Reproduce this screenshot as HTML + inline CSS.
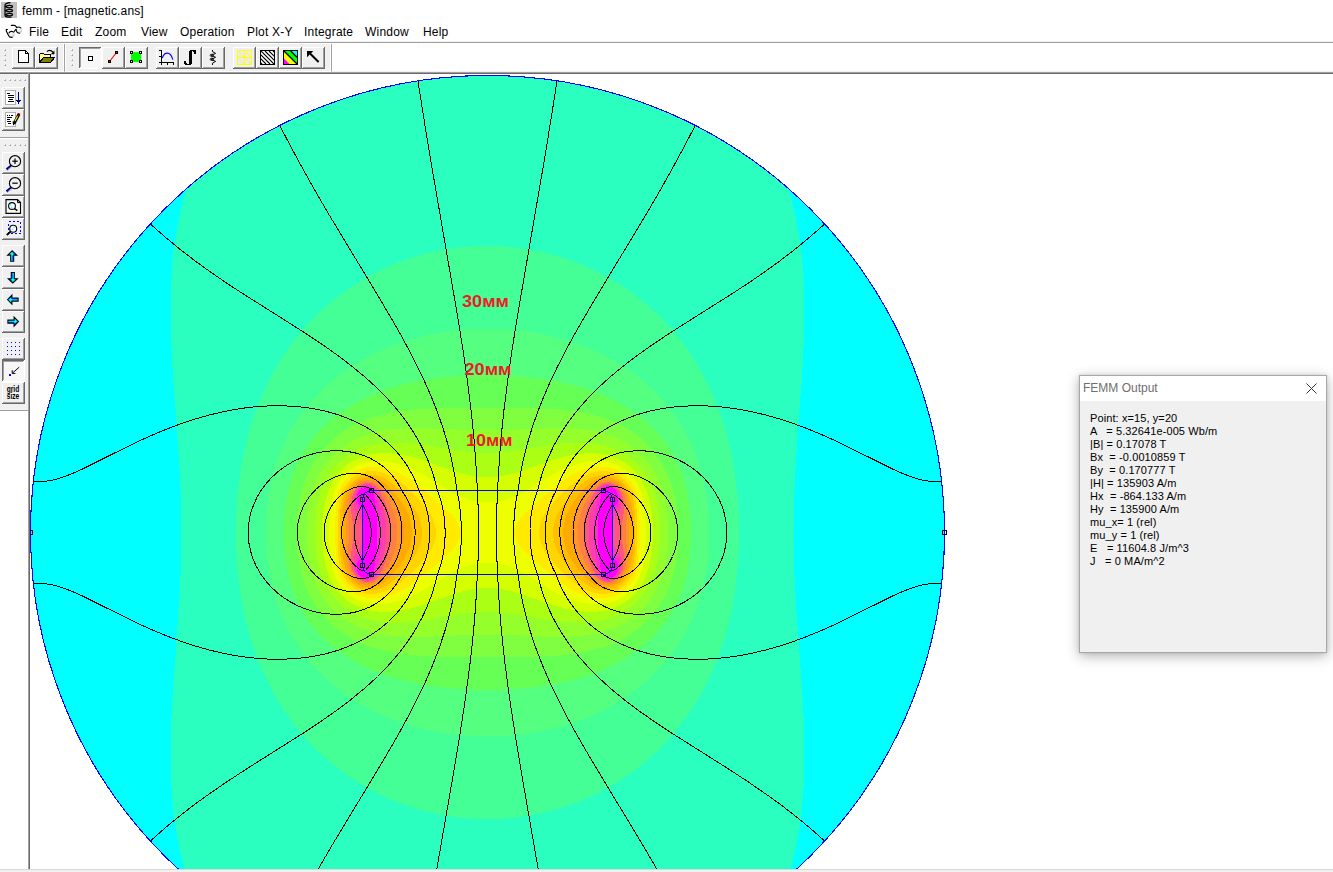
<!DOCTYPE html>
<html lang="en">
<head>
<meta charset="utf-8">
<title>femm - [magnetic.ans]</title>
<style>
*{box-sizing:border-box;margin:0;padding:0}
html,body{width:1333px;height:872px;overflow:hidden;background:#fff;font-family:"Liberation Sans",sans-serif;color:#000}
#app{position:relative;width:1333px;height:872px;background:#fff;overflow:hidden}
#title{position:absolute;left:22px;top:3px;font-size:12px;line-height:16px;white-space:nowrap;letter-spacing:.15px}
#menu{position:absolute;left:0;top:22px;height:20px;width:1333px;font-size:12px;line-height:20px;white-space:nowrap}
#menu span{position:absolute;top:0;letter-spacing:.2px}
#dockline{position:absolute;left:0;top:41px;width:1333px;height:2px;background:#a0a0a0;border-top:1px solid #f0f0f0}
#tb1{position:absolute;left:0;top:44px;width:65px;height:28px;background:#f0f0f0;border-right:1px solid #a0a0a0;border-bottom:1px solid #fff;box-shadow:inset -1px 0 0 #fff}
#tb2{position:absolute;left:65px;top:44px;width:267px;height:28px;background:#f0f0f0;border-right:1px solid #a0a0a0;border-left:1px solid #fff;border-bottom:1px solid #fff;box-shadow:inset -1px 0 0 #fff}
#topedge{position:absolute;left:0;top:71px;width:1333px;height:3px;background:linear-gradient(#f0f0f0 0 1px,#a0a0a0 1px 2px,#696969 2px 3px)}
#ltb{position:absolute;left:0;top:74px;width:28px;height:337px;background:#f0f0f0;border-bottom:1px solid #a0a0a0}
#ledge{position:absolute;left:28px;top:73px;width:2px;height:796px;background:#696969;border-left:1px solid #a0a0a0}
#status{position:absolute;left:0;top:869px;width:1333px;height:3px;background:#f0f0f0;border-top:1px solid #d8d8d8}
.btn{position:absolute;width:23px;height:22px;background:#f0f0f0;border:1px solid;border-color:#fff #696969 #696969 #fff;box-shadow:inset -1px -1px 0 #a0a0a0}
.btn.dn{border-color:#696969 #fff #fff #696969;box-shadow:inset 1px 1px 0 #a0a0a0;background:#f6f6f6}
.btn svg{position:absolute;left:0;top:0}
.grip{position:absolute;width:3px}
#plot{position:absolute;left:0;top:0}
#panel{position:absolute;left:1079px;top:375px;width:248px;height:278px;background:#f0f0f0;border:1px solid #a8a8a8;box-shadow:0 3px 12px rgba(0,0,0,.30),0 0 3px rgba(0,0,0,.12)}
#ptitle{position:absolute;left:0;top:0;width:246px;height:25px;background:#fff;color:#6e6e6e;font-size:12px;line-height:16px;padding:4px 0 0 3px;letter-spacing:0}
#pclose{position:absolute;left:226px;top:7px}
#ptext{position:absolute;left:10px;top:36px;font-size:11px;line-height:13px;white-space:pre;letter-spacing:.1px}
#ptext div{height:13px;white-space:pre}
.lbl{font-family:"Liberation Sans",sans-serif;font-weight:bold;font-size:16.5px;fill:#ee1c25}
</style>
</head>
<body>
<div id="app">
<svg id="plot" width="1333" height="872" viewBox="0 0 1333 872">
<defs><clipPath id="cc"><circle cx="487.5" cy="532.5" r="457"/></clipPath><clipPath id="view"><rect x="30" y="74" width="1303" height="795"/></clipPath></defs>
<g clip-path="url(#view)">
<g clip-path="url(#cc)" shape-rendering="crispEdges">
<circle cx="487.5" cy="532.5" r="457.0" fill="rgb(0,255,255)"/>
<path fill="rgb(42,255,191)" fill-rule="evenodd" d="M254 74.5L255 73.5L720 73.5L729.5 83.5L738.5 94L746.6 104.5L754.3 115.5L760 124.5L765.2 133.5L770 142.5L774.8 152.5L779.1 162.5L783 172.5L789.6 192.5L795 213.5L799.3 236.5L802.3 260.5L804 285.5L804.5 313.5L803.7 344.5L801.9 377.5L797 443.5L795.2 472.5L793.9 503.5L793.5 533.5L793.9 562.5L795.2 593.5L801.8 686.5L803.6 717.5L804.4 745.5L804.2 771.5L803.6 786.5L802.6 800.5L801.2 814.5L799.3 828.5L797.1 841.5L794.3 854.5L791 867.5L787.5 879.5L187.5 879.5L184 867.5L180.7 854.5L177.9 841.5L175.7 828.5L173.8 814.5L172.4 800.5L171.3 785.5L170.7 769.5L170.6 744.5L171.5 716.5L173.2 686.5L179.7 594.5L181 564.5L181.5 535.5L181.2 505.5L179.9 474.5L178.1 445.5L172.9 374.5L171 337.5L170.6 317.5L170.6 299.5L171.2 282.5L172.3 265.5L173.8 250.5L175.7 236.5L178.1 222.5L181.1 208.5L184.5 195.5L188.5 182.5L192.7 170.5L197.5 158.6L203 146.5L208.7 135.5L215 124.5L222 113.5L229.1 103.5L236.9 93.5L245.5 83.5Z"/>
<path fill="rgb(68,255,149)" fill-rule="evenodd" d="M469.4 246.5L482.5 245.9L495.5 246L508.5 246.7L521.5 248.2L533.5 250.1L546.5 253L558.5 256.2L571.5 260.5L583.5 265.2L595.5 270.7L606.5 276.4L617.5 282.9L628.5 290.2L638.5 297.7L648.5 306L657.5 314.3L666.5 323.5L674.5 332.6L682.5 342.7L690.2 353.5L697.2 364.5L703.5 375.6L709.5 387.5L714.8 399.5L719.5 411.6L723.8 424.5L727.8 438.5L730.8 451.5L733.5 465.5L735.6 479.5L737.2 493.5L738.3 508.5L738.9 524.5L738.9 540.5L738.3 556.5L737.2 571.5L735.4 587.5L733.2 601.5L730.4 615.5L727.3 628.5L723.5 641.5L719.1 654.5L714 667.5L708.5 679.5L702.5 691.2L696 702.5L688.8 713.5L681.5 723.6L673.5 733.6L664.5 743.6L655.5 752.6L645.5 761.6L635.5 769.6L624.5 777.5L613.5 784.5L602.5 790.7L590.5 796.7L578.5 801.8L566.5 806.2L553.5 810.2L540.5 813.4L527.5 815.9L514.5 817.7L501.5 818.8L488.5 819.2L475.5 818.9L462.5 817.9L450.5 816.4L437.5 814.1L425.5 811.3L413.5 807.8L400.5 803.4L389.5 798.9L377.5 793.3L366.5 787.4L355.5 780.8L344.5 773.3L334.5 765.7L324.5 757.2L315.5 748.7L306.5 739.3L298.5 730L290.5 719.6L283.5 709.5L276.6 698.5L270.5 687.5L265 676.5L259.8 664.5L255.2 652.5L250.9 639.5L247.2 626.5L244.2 613.5L241.5 599.5L239.4 585.5L237.8 571.5L236.7 556.5L236.1 541.5L236.1 525.5L236.6 509.5L237.7 494.5L239.4 479.5L241.6 464.5L244.2 451.5L247.5 437.5L251.2 424.5L255.5 411.5L260.5 398.8L266 386.5L272.1 374.5L278.4 363.5L285.5 352.5L292.5 342.7L300.5 332.6L309.5 322.5L318.5 313.3L327.5 305.1L337.5 296.9L348.5 288.8L359.5 281.7L370.5 275.3L382.5 269.3L394.5 264L406.5 259.5L418.5 255.6L431.5 252.2L443.5 249.8L456.5 247.8Z"/>
<path fill="rgb(85,255,128)" fill-rule="evenodd" d="M485.1 328.5L496.5 328.6L508.5 329.3L519.5 330.3L531.5 332L542.5 334L553.5 336.5L563.5 339.2L574.5 342.7L584.5 346.4L594.5 350.6L604.5 355.4L613.5 360.3L622.5 365.8L630.5 371.2L638.5 377.2L646.5 383.9L653.5 390.4L660.5 397.7L666.5 404.6L672.7 412.5L678.2 420.5L683.5 429.1L688.1 437.5L692.3 446.5L696 455.5L699.5 465.5L702.4 475.5L704.7 485.5L706.7 496.5L708 506.5L708.9 516.5L709.4 527.5L709.4 538.5L708.8 549.5L707.8 560.5L706.2 571.5L704.3 581.5L701.9 591.5L698.9 601.5L695.6 610.5L691.9 619.5L687.6 628.5L682.6 637.5L677.6 645.5L671.9 653.5L665.6 661.5L659.5 668.4L652.5 675.5L644.5 682.8L636.5 689.3L628.5 695.2L619.5 701.1L610.5 706.4L601.5 711.1L591.5 715.7L581.5 719.8L571.5 723.3L560.5 726.7L549.5 729.5L538.5 731.8L527.5 733.6L516.5 735L505.5 735.9L493.5 736.4L481.5 736.4L469.5 735.9L457.5 734.9L446.5 733.5L434.5 731.4L423.5 729L412.5 726.1L402.5 723L392.5 719.4L382.5 715.3L372.5 710.6L363.5 705.8L354.5 700.5L345.5 694.5L337.5 688.6L329.5 682L322.5 675.5L315.5 668.4L308.6 660.5L302.5 652.7L296.8 644.5L291.8 636.5L286.9 627.5L282.7 618.5L279 609.5L275.5 599.5L272.6 589.5L270.3 579.5L268.3 568.5L267 558.5L266.1 548.5L265.6 537.5L265.6 526.5L266.2 515.5L267.2 504.5L268.8 493.5L270.7 483.5L273.1 473.5L276.1 463.5L279.4 454.5L283.1 445.5L287.4 436.5L292.4 427.5L297.5 419.4L303.5 410.9L309.5 403.4L316.5 395.5L323.5 388.5L331.5 381.3L339.5 374.9L347.5 369.1L356.5 363.3L365.5 358.1L375.5 352.9L384.5 348.8L394.5 344.8L404.5 341.3L415.5 338L426.5 335.3L438.5 332.8L449.5 331.1L461.5 329.7L473.5 328.8Z"/>
<path fill="rgb(102,255,85)" fill-rule="evenodd" d="M469 375.5L487.5 375.1L506.5 375.5L525.5 376.8L542.5 378.8L558.5 381.5L573.5 384.9L587.5 389.1L600.5 394L612.5 399.5L623.5 405.6L637.5 414.8L647.5 422.7L656.4 431.5L663.9 440.5L670.7 450.5L676.7 461.5L682.1 474.5L684.4 481.5L686.5 489.5L689.2 504.5L690.8 521.5L691 539.5L689.7 556.5L687.2 572.5L685.2 580.5L683.1 587.5L678.1 600.5L671.9 612.5L664.7 623.5L656.4 633.5L647.5 642.3L637.5 650.2L622.5 660L609.5 667L600.5 671L590.5 674.9L580.5 678.1L569.5 681.1L558.5 683.5L546.5 685.6L534.5 687.3L522.5 688.5L508.5 689.4L494.5 689.8L480.5 689.8L466.5 689.4L452.5 688.5L439.5 687.1L427.5 685.5L415.5 683.3L404.5 680.8L394.5 678.1L384.5 674.9L374.5 671L365.5 667L357.5 662.9L340.5 652.3L333.5 647.2L327.5 642.3L321.5 636.6L315.9 630.5L311.1 624.5L306.2 617.5L301.9 610.5L298.3 603.5L294.4 594.5L290.9 584.5L288.3 574.5L286.4 564.5L284.8 552.5L284 540.5L283.9 528.5L284.5 516.5L285.6 505.5L287.4 494.5L289.8 484.5L292.5 475.5L296 466.5L300.3 457.5L304.9 449.5L310.5 441.3L316.5 433.8L322.5 427.4L329.5 421L336.5 415.5L343.5 410.7L355.5 403.3L364.5 398.5L374.5 394L384.5 390.1L394.5 386.9L405.5 383.9L417.5 381.3L429.5 379.2L442.5 377.5L455.5 376.3Z"/>
<path fill="rgb(128,255,64)" fill-rule="evenodd" d="M430.6 408.5L465.5 407.7L527.5 407.9L554.5 409.1L565.5 410.2L576.5 411.6L587.5 413.7L597.5 416.1L606.5 419L615.5 422.6L623.5 426.5L631.5 431.4L638.5 436.5L645.5 442.7L653.5 451.4L660.1 460.5L665.7 470.5L670 480.5L673.5 491.5L676.1 503.5L677.7 516.5L678.4 530.5L678 544.5L676.7 557.5L674.2 570.5L671.1 581.5L666.7 592.5L661.3 602.5L655.2 611.5L647.5 620.4L642.5 625.1L636.5 630.1L630.5 634.3L624.5 637.9L618.5 641.1L611.5 644.1L604.5 646.7L596.5 649.1L588.5 651.1L579.5 652.9L560.5 655.4L538.5 656.8L510.5 657.3L460.5 657.3L433.5 656.6L410.5 655L391.5 652.1L381.5 649.9L372.5 647.4L364.5 644.5L356.5 641.1L349.5 637.4L342.5 632.9L335.5 627.7L329.5 622.3L323.1 615.5L317.6 608.5L313.1 601.5L308.8 593.5L305 584.5L302 575.5L299.9 566.5L298.2 556.5L297.1 545.5L296.6 533.5L296.9 521.5L297.9 510.5L299.7 499.5L302 489.5L305 480.5L308.8 471.5L312.5 464.5L316.9 457.5L322.2 450.5L327.5 444.6L333.5 439L339.5 434.2L346.5 429.4L353.5 425.5L360.5 422.1L368.5 419L377.5 416.1L386.5 413.9L396.5 412L407.5 410.4L418.5 409.3Z"/>
<path fill="rgb(149,255,43)" fill-rule="evenodd" d="M401.8 428.5L412.5 428.1L424.5 428.2L467.5 430L486.5 430.4L506.5 430.1L552.5 428.1L565.5 428.2L576.5 428.7L584.5 429.5L592.5 430.8L599.5 432.2L606.5 434.2L613.5 436.7L619.5 439.3L625.5 442.6L630.5 445.8L637.5 451.2L643.9 457.5L649.7 464.5L654.8 472.5L659.3 481.5L662.6 490.5L665 499.5L666.9 510.5L668.1 522.5L668.3 535.5L667.6 548.5L666 560.5L663.8 570.5L660.5 580.6L655.9 590.5L651.1 598.5L644.5 606.9L636.7 614.5L628.5 620.6L619.5 625.7L609.5 629.8L599.5 632.8L587.5 635.1L574.5 636.4L563.5 636.9L551.5 636.9L507.5 635L487.5 634.6L467.5 635L423.5 636.9L410.5 636.9L399.5 636.4L390.5 635.5L382.5 634.2L375.5 632.8L368.5 630.8L361.5 628.3L355.5 625.7L349.5 622.4L344.5 619.2L338.5 614.7L333 609.5L327.6 603.5L323.5 597.9L319.6 591.5L316.1 584.5L313.4 577.5L310.9 569.5L309 560.5L307.6 550.5L306.8 540.5L306.7 529.5L307.1 519.5L308.2 509.5L310 499.5L312.1 491.5L314.5 484.5L317 478.5L320.8 471.5L324.6 465.5L329.3 459.5L333.9 454.5L338.5 450.3L344.5 445.8L350.5 442L356.5 438.8L362.5 436.3L369.5 433.9L376.5 432L384.5 430.4L392.5 429.3Z"/>
<path fill="rgb(170,255,21)" fill-rule="evenodd" d="M390.4 442.5L400.5 442.5L412.5 443.3L425.5 445.1L463.5 451.3L475.5 452.5L487.5 453L499.5 452.5L511.5 451.3L549.5 445.1L562.5 443.3L574.5 442.5L584.5 442.5L594.5 443.4L604.5 445.3L613.5 448.2L622.5 452.4L629.5 456.9L635.5 461.9L640.8 467.5L645.3 473.5L649.4 480.5L653 488.5L655.7 496.5L657.7 505.5L659.3 516.5L660 527.5L659.9 539.5L659.1 550.5L657.3 561.5L655.1 570.5L652.2 578.5L648.4 586.5L643.5 594.1L638.1 600.5L631.5 606.5L624.5 611.4L616.5 615.6L608.5 618.6L599.5 620.8L589.5 622.2L577.5 622.6L563.5 621.8L549.5 619.9L511.5 613.7L499.5 612.5L487.5 612L475.5 612.5L463.5 613.7L425.5 619.9L412.5 621.7L400.5 622.5L390.5 622.5L380.5 621.6L370.5 619.7L361.5 616.8L352.5 612.6L346.5 608.8L341.5 604.9L336.9 600.5L332.6 595.5L329 590.5L325.6 584.5L322.8 578.5L320.2 571.5L318.1 563.5L316.6 555.5L315.5 546.5L315 537.5L315 527.5L315.5 518.5L316.6 509.5L318.1 501.5L319.9 494.5L322 488.5L324.6 482.5L327.2 477.5L330.4 472.5L334.2 467.5L338.5 462.9L342.5 459.3L347.5 455.5L352.5 452.4L358.5 449.4L364.5 447.1L370.5 445.3L376.5 444L383.5 443Z"/>
<path fill="rgb(213,255,0)" fill-rule="evenodd" d="M376.8 453.5L383.5 453.1L390.5 453.3L398.5 454.2L406.5 455.7L414.5 457.6L423.5 460.3L452.5 470.5L463.5 473.9L474.5 476.3L485.5 477.4L491.5 477.3L497.5 476.8L509.5 474.4L521.5 470.8L555.5 459.1L567.5 455.9L577.5 454.1L588.5 453.1L599.5 453.6L604.5 454.4L609.5 455.6L618.5 459L624.5 462.4L630.1 466.5L635.2 471.5L639.2 476.5L642.4 481.5L645 486.5L647.8 494.5L649.9 502.5L651.7 512.5L652.6 520.5L652.9 531.5L652.6 543.5L651.7 552.5L649.9 562.5L647.8 570.5L645 578.5L641.2 585.5L636.9 591.5L632.3 596.5L626.5 601.3L620.5 605L613.5 608.1L605.5 610.4L597.5 611.6L590.5 611.9L583.5 611.6L575.5 610.6L567.5 609.1L551.5 604.7L522.5 594.5L511.5 591.1L500.5 588.7L489.5 587.6L483.5 587.7L477.5 588.2L465.5 590.6L453.5 594.2L419.5 605.9L407.5 609.1L397.5 610.9L386.5 611.9L375.5 611.4L370.5 610.6L365.5 609.4L356.5 606L351.5 603.3L347.5 600.5L343.5 597.3L339.8 593.5L336.5 589.5L333.2 584.5L330.5 579.5L328.9 575.5L326.6 568.5L324.9 561.5L323.5 553.5L322.6 546.5L322.1 538.5L322.1 529.5L322.4 520.5L323.2 513.5L325.8 499.5L327.5 493.5L329.6 487.5L333.8 479.5L336.5 475.5L339.5 471.8L343.5 467.7L347.5 464.5L351.5 461.7L356.5 459L361.5 456.9L366.5 455.4L371.5 454.2Z"/>
<path fill="rgb(238,255,0)" fill-rule="evenodd" d="M369.6 461.5L377.5 460.8L385.5 461.3L394.5 462.9L403.1 465.5L412.5 469.3L422.5 474.3L434.6 481.5L448.1 490.5L457.5 495L465.5 498.3L472.5 500.5L479.5 502L486.5 502.5L493.5 502.2L500.5 501L507.5 499L515.5 495.9L526.9 490.5L542 480.5L555.5 472.7L566.5 467.6L576.5 464L587.5 461.5L592.5 461L597.5 460.8L602.5 461.1L607.5 461.9L612.5 463.2L616.5 464.7L621.5 467.3L626.5 470.7L630.7 474.5L634.5 479L639.1 486.5L641.5 493.5L643.2 500.5L644.3 507.5L645.7 520.5L646 531.5L645.8 542.5L645.2 550.5L643.4 563.5L641.5 571.5L639.1 578.5L635.5 584.6L630.7 590.5L625.5 595.1L619.5 598.9L613.5 601.5L606.5 603.3L598.5 604.1L590.5 603.8L583.5 602.7L576.5 601L569.5 598.6L562.1 595.5L554 591.5L545.2 586.5L526.9 574.5L518.5 570.4L511.5 567.5L503.5 564.8L496.5 563.2L489.5 562.5L483.5 562.6L477.5 563.4L471.5 564.8L464.5 567.1L457.5 570L448.1 574.5L433 584.5L420.5 591.7L409.5 597L398.5 601L387.5 603.5L382.5 604L377.5 604.2L372.5 603.9L367.5 603.1L362.5 601.8L358.5 600.3L354.5 598.3L350.5 595.8L344.3 590.5L341.5 587.3L338.8 583.5L335.9 578.5L334.8 575.5L331.8 564.5L329.6 548.5L329 533.5L329.5 518.5L331.1 504.5L333.2 494.5L335.9 486.5L340.2 479.5L345.5 473.3L348.8 470.5L352.5 467.9L356.5 465.6L360.5 463.9L365.5 462.3Z"/>
<path fill="rgb(255,234,0)" fill-rule="evenodd" d="M365.7 467.5L370.5 466.8L375.5 466.6L380.5 467L386.5 468.2L392.5 470.1L398.2 472.5L403.9 475.5L410.3 479.5L417.1 484.5L424 490.5L435.1 499.5L452.8 515.5L456.2 520.5L458.4 524.5L460.2 528.5L461.5 532.5L460.2 536.5L458.4 540.5L456.2 544.5L452.8 549.5L437.5 563.5L417.1 580.5L407.3 587.5L397.5 592.8L392.5 594.9L387.5 596.5L382.5 597.7L378.5 598.2L370.5 598.2L366.5 597.7L362.5 596.7L358.5 595.2L355.5 593.7L349.6 589.5L346.5 586.5L344 583.5L339.7 576.5L337.5 570.5L336.2 562.5L335.3 541.5L335.3 521.5L336.2 502.5L336.9 497.5L338.1 492.5L339.7 488.5L342.6 483.5L345.5 479.6L348.5 476.5L352.5 473.2L356.5 470.8L360.5 469ZM591.7 467.5L596.5 466.8L600.5 466.6L604.5 466.8L608.5 467.3L612.5 468.3L616.5 469.8L622.9 473.5L626.5 476.5L629.4 479.5L632.4 483.5L634.8 487.5L636.2 490.5L637.2 493.5L638.7 501.5L639.7 523.5L639.7 543.5L638.8 562.5L637.9 568.5L636.6 573.5L634.8 577.5L631.5 582.8L628.5 586.5L624.5 590.3L620.5 593.1L615.5 595.6L610.5 597.2L605.5 598.1L600.5 598.4L595.5 598.1L590.5 597.3L585.5 595.9L580.5 594.1L574.5 591.4L568.5 588L563.2 584.5L557.9 580.5L551 574.5L539.9 565.5L522.2 549.5L518.8 544.5L516.6 540.5L514.8 536.5L513.5 532.5L514.8 528.5L516.6 524.5L518.8 520.5L522.2 515.5L533 505.5L542.2 497.5L551 490.5L559.2 483.5L569.4 476.5L574.8 473.5L580.5 470.9L586.5 468.8Z"/>
<path fill="rgb(255,213,0)" fill-rule="evenodd" d="M366.3 471.5L370.5 471L375.5 471.2L380.5 472.1L385 473.5L389.7 475.5L395.1 478.5L399.5 481.5L404.5 485.5L418.9 499.5L424.9 506.5L430.1 513.5L431.8 516.5L434.2 522.5L435.5 527.5L436.3 532.5L434.8 540.5L433.1 545.5L431.4 549.5L427.9 554.5L423.3 560.5L414 570.5L402.5 581.2L398.1 584.5L393.4 587.5L388.5 590.1L383.5 592L378.5 593.3L373.5 593.9L366.5 593.5L360.5 591.9L354.5 588.8L349.5 584.5L346.9 581.5L343.5 576.5L341 571.5L339.2 564.5L338.3 555.5L338 536.5L338.2 511.5L339.1 501.5L340.6 494.5L342.5 490.1L346.2 484.5L348.5 481.5L351.5 478.5L354.5 476.2L358.5 473.9L362.5 472.4ZM597.6 471.5L601.5 471.1L605.5 471.1L609.5 471.6L612.5 472.4L618.5 475L621.5 476.9L624.5 479.4L628.8 484.5L632.1 489.5L633.6 492.5L635.6 499.5L636.6 508.5L637 527.5L636.7 554.5L635.8 564.5L634 571.5L632.1 575.5L628.1 581.5L625.5 584.6L622.5 587.3L618.5 590L614.5 591.9L610.5 593.2L605.5 593.9L601.5 593.9L596.5 593.3L591.5 592L587.5 590.5L583.4 588.5L578.4 585.5L574.2 582.5L569.4 578.5L560 569.5L555.2 564.5L550.1 558.5L544.9 551.5L543.2 548.5L540.8 542.5L539.5 537.5L538.7 532.5L540.2 524.5L541.9 519.5L543.6 515.5L550.1 506.5L558 497.5L570.5 485.5L578.4 479.5L583.4 476.5L588.5 474.1L593.5 472.4ZM612.5 519.5L612.5 545.5Z"/>
<path fill="rgb(255,191,0)" fill-rule="evenodd" d="M363 475.5L367.5 474.6L371.5 474.5L375.5 475L379.5 476.1L383.5 477.8L387.5 480L391.5 482.8L395.8 486.5L402.7 493.5L407.1 498.5L412.3 505.5L416.1 511.5L418.3 515.5L420 520.5L421.3 525.5L422.1 531.5L421.9 535.5L421.1 540.5L418.3 549.5L413 558.5L406.2 567.5L395.8 578.5L388.5 584.4L384.5 586.7L380.5 588.5L376.5 589.7L372.5 590.4L366.5 590.2L361.5 589L356.5 586.6L351.5 582.4L346.2 575.5L343.2 569.5L341.5 563.5L340.4 555.5L340.4 510.5L341.1 503.5L342.4 497.5L344 493.5L346.2 489.5L351.5 482.6L356.5 478.4L359.5 476.8ZM597.6 475.5L601.5 474.7L604.5 474.5L610.5 475.1L613.5 476L616.5 477.3L619.5 479.1L622.4 481.5L625.2 484.5L628.1 488.5L631.4 494.5L632.5 497.3L633.3 500.5L634.6 509.5L634.6 554.5L633.9 561.5L632.5 567.7L631 571.5L628.8 575.5L625.2 580.5L622.4 583.5L619.5 585.9L615.5 588.2L611.5 589.6L607.5 590.4L603.5 590.5L599.5 590L595.5 588.9L590.5 586.7L586.7 584.5L582.5 581.4L578.1 577.5L573.3 572.5L568.8 567.5L564.1 561.5L560.1 555.5L557.3 550.5L556 547.5L554.4 542.5L552.9 533.5L553.1 529.5L553.9 524.5L556.7 515.5L561.4 507.5L566.4 500.5L573.3 492.5L578.1 487.5L582.6 483.5L586.5 480.6L590.1 478.5L593.5 476.9ZM612.5 513.6L612.5 551.4L612.8 532.5Z"/>
<path fill="rgb(255,170,0)" fill-rule="evenodd" d="M366.1 477.5L369.5 477.3L373.5 477.8L377.5 479L380.7 480.5L383.9 482.5L387.6 485.5L395.1 493.5L399 498.5L403 504.5L405.8 509.5L408.7 515.5L410.9 523.5L412.1 532.5L410.9 541.5L408.7 549.5L403.6 559.5L397.5 568.5L389.7 577.5L383.5 582.8L379.5 585.1L376.5 586.4L373.5 587.2L369.5 587.7L364.5 587.2L360.5 585.9L355.5 582.9L352.1 579.5L348.4 574.5L346 569.5L343.9 562.5L342.5 554.5L342.5 510.5L343.7 503.5L345 498.5L346.4 494.5L348.4 490.5L350.5 487.5L354 483.5L356.5 481.4L359.5 479.5L362.5 478.3ZM603.1 477.5L608.5 477.4L613.5 478.7L618.5 481.4L622 484.5L625.9 489.5L629 495.5L631.1 502.5L632.5 510.5L632.5 554.5L631.3 561.5L629.7 567.5L628.2 571.5L625.9 575.5L622.5 579.9L619.9 582.5L616.5 584.9L613.5 586.3L610.5 587.2L606.5 587.7L602.5 587.4L599.5 586.7L596.2 585.5L592.6 583.5L589.8 581.5L586.3 578.5L578.3 569.5L571.4 559.5L566.3 549.5L564.1 541.5L562.9 532.5L564.1 523.5L566.3 515.5L570.8 506.5L576 498.5L579.9 493.5L584.4 488.5L589.8 483.5L593.5 480.9L596.5 479.4L599.5 478.3ZM612.5 509.6L612.3 532.5L612.5 555.4L612.9 532.5Z"/>
<path fill="rgb(255,149,43)" fill-rule="evenodd" d="M362.6 480.5L365.5 479.8L368.5 479.6L371.5 479.8L374.5 480.7L377.5 482L380.5 484L383.3 486.5L386 489.5L390 494.5L393.3 499.5L396.2 504.5L399.1 510.5L401.2 515.5L402.3 519.5L403.3 524.5L404 530.5L404.1 533.5L403.4 539.5L401.2 549.5L397.7 557.5L393.3 565.5L390 570.5L386 575.5L381.1 580.5L378.3 582.5L375.5 583.9L372.5 584.9L369.5 585.4L364.5 585L359.5 583.1L355.8 580.5L352.3 576.5L349.7 572.5L347.7 567.5L346.4 561.5L345.4 554.5L345.9 532.5L345.4 510.5L347 500.5L348.8 494.5L350.3 491.5L352.3 488.5L354.8 485.5L357 483.5L359.5 481.9ZM601 480.5L603.5 479.8L606.5 479.6L611.5 480.2L616.5 482.5L620.2 485.5L624.1 490.5L626.6 495.5L628.3 501.5L629.6 510.5L629.1 532.5L629.6 554.5L628.6 561.5L627.3 567.5L625.7 571.5L624.1 574.5L621.9 577.5L619.2 580.5L616.5 582.5L613.5 584.1L610.5 585L607.5 585.4L604.5 585.3L601.5 584.7L598.5 583.5L595.5 581.7L590.7 577.5L584.3 569.5L578.3 559.5L573.8 549.5L571.9 541.5L570.9 533.5L571.6 525.5L573.5 516.5L576.3 509.5L579.9 502.5L585 494.5L590.7 487.5L595.5 483.3L598.5 481.5ZM612.5 506.7L612.2 532.5L612.5 558.3L612.9 548.5L613.1 532.5L612.9 516.5Z"/>
<path fill="rgb(255,128,64)" fill-rule="evenodd" d="M366.3 481.5L368.5 481.4L371.5 481.9L374.5 483L376.5 484.2L379.3 486.5L381.1 488.5L385.3 494.5L390.7 504.5L394.7 514.5L396.7 523.5L397.2 530.5L396.8 540.5L395 549.5L392 557.5L388.2 565.5L383.3 573.5L381.1 576.5L378.2 579.5L375.5 581.5L373.5 582.5L371.5 583.1L368.5 583.6L364.5 583.2L360.5 581.7L357.3 579.5L353.7 575.5L351.4 571.5L349.7 566.5L348.7 561.5L348 554.5L349.1 532.5L348 510.5L348.7 503.5L349.7 498.5L351 494.5L352.4 491.5L353.7 489.5L356.3 486.5L358.5 484.5L360.5 483.3L363.5 482ZM605.7 481.5L610.5 481.8L614.5 483.3L617.7 485.5L621.3 489.5L623.6 493.5L625.3 498.5L626.3 503.5L627 510.5L625.9 532.5L627 554.5L626.3 561.5L625.3 566.5L624 570.5L622.6 573.5L620.5 576.5L618.5 578.8L616.5 580.5L613.5 582.2L610.5 583.2L607.5 583.6L604.5 583.3L602.5 582.8L598.1 580.5L593.9 576.5L589.1 569.5L583.8 559.5L580 549.5L578.2 540.5L577.8 533.5L578.2 524.5L580 515.5L583 507.5L586.8 499.5L591 492.5L595.7 486.5L598.1 484.5L600.5 483L603.5 481.9ZM612.5 504.4L612.1 532.5L612.5 560.6L613.1 550.5L613.3 532.5L613.1 514.5Z"/>
<path fill="rgb(255,85,128)" fill-rule="evenodd" d="M363.8 483.5L366.5 483L368.5 483L372.5 484L376.2 486.5L378 488.5L379.9 491.5L384.9 501.5L388.9 512.5L390.3 518.5L391.3 528.5L391.3 537.5L390.3 546.5L388.2 554.5L384.9 563.5L381.1 571.5L377.1 577.5L373.5 580.5L371.5 581.4L368.5 582L365.5 581.9L362.5 581.1L359.5 579.4L356.4 576.5L354.3 573.5L352.5 569.5L351.6 565.5L351.1 560.5L351 554.5L352.9 541.5L353.5 533.5L353 524.5L351 510.5L351.6 499.5L352.8 494.5L355.6 489.5L357.5 487.3L359.5 485.6L361.5 484.4ZM362.5 517.8L362 532.5L362.5 547.2ZM603.9 483.5L607.5 482.9L611.5 483.6L614.5 484.9L617.7 487.5L620.1 490.5L622.2 494.5L623.3 498.5L623.9 504.5L624 510.5L622.1 523.5L621.5 531.5L622 540.5L624 554.5L623.8 561.5L623.3 566.5L622.5 569.5L621.3 572.5L619.4 575.5L617.7 577.5L615.5 579.4L613.5 580.6L611.5 581.4L608.5 582L604.5 581.7L602.5 581L600.5 579.9L597 576.5L593.9 571.5L589.3 561.5L585.8 551.5L584.5 545.5L583.7 536.5L583.7 527.5L584.7 518.5L586.1 512.5L588.9 504.5L592.9 495.5L597 488.5L600 485.5ZM612.5 502.7L612 532.5L612.5 562.3L613.2 552.5L613.4 532.5L613.2 512.5Z"/>
<path fill="rgb(255,64,170)" fill-rule="evenodd" d="M365 484.5L368.5 484.3L370.5 484.7L372.5 485.6L374.8 487.5L377.3 491.5L381.2 501.5L384.4 512.5L385.6 520.5L386.2 529.5L386.1 539.5L384.9 549.5L383.4 556.5L380.1 566.5L377.3 573.5L374.8 577.5L373.5 578.7L371.5 579.9L367.5 580.8L364.5 580.4L362.5 579.7L359.5 577.8L357.5 575.8L355.9 573.5L354.5 570.5L353.7 567.5L353.4 564.5L353.6 559.5L354.8 554.5L357.5 550.3L361.5 545.3L362.5 555.5L362.7 536.5L362.5 509.5L361.5 519.7L359.5 517.3L356 512.5L354.5 509.7L353.5 504.8L353.5 498.5L354.9 493.5L357.3 489.5L360.5 486.4L362.5 485.3ZM605.4 484.5L608.5 484.3L611.5 484.9L614.5 486.4L616.5 488.1L618.5 490.5L620.1 493.5L621.1 496.5L621.6 500.5L621.4 505.5L620.2 510.5L617.5 514.7L613.5 519.7L613.2 508.5L612.5 501.4L612 523.5L612.1 551.5L612.5 563.6L613.2 556.5L613.5 545.3L617.5 550.3L620.2 554.5L621.5 560.5L621.6 564.5L621.3 567.5L619.7 572.5L618.5 574.5L616.5 576.9L614.5 578.6L612.5 579.7L610.5 580.4L607.5 580.8L604.5 580.3L601.2 578.5L598.7 575.5L596.8 571.5L593.2 561.5L590.6 552.5L589.3 543.5L588.7 534.5L588.9 525.5L589.9 516.5L591.1 510.5L593.8 501.5L596.8 493.5L599.4 488.5L601.2 486.5L602.5 485.6Z"/>
<path fill="rgb(255,43,212)" fill-rule="evenodd" d="M365.5 485.5L368.5 485.4L371.5 486.4L373.9 488.5L374.9 490.5L379.6 508.5L380.9 518.5L381.5 528.5L381.3 540.5L380.3 551.5L379.2 558.5L375.8 571.5L374.4 575.5L373 577.5L370.5 579.1L367.5 579.7L364.5 579.3L362.5 578.5L360.5 577.2L358.7 575.5L356.3 571.5L355.6 569.5L355.2 566.5L355.7 562.5L356.7 559.5L358.5 556.7L361.5 553.7L362.5 560.6L362.9 533.5L362.5 504.4L361.5 511.3L359.5 509.5L357.5 506.9L355.9 503.5L355.3 500.5L355.3 497.5L356.3 493.5L358.7 489.5L361.5 487.1L363.5 486ZM606.1 485.5L608.5 485.4L610.5 485.7L613.5 487.1L615.3 488.5L617.1 490.5L618.7 493.5L619.4 495.5L619.8 498.5L619.3 502.5L618.3 505.5L616.5 508.3L613.5 511.3L613.1 504.5L612.5 500.4L612.1 507.5L611.9 526.5L612 553.5L612.5 564.5L613.1 560.5L613.5 553.7L616.5 556.7L618.7 560.5L619.7 564.5L619.6 568.5L618.3 572.5L617.1 574.5L615.3 576.5L613.5 577.9L611.5 579L607.5 579.7L604.5 579.1L602.5 577.9L601.1 576.5L599.7 573.5L596.1 559.5L595.1 554.5L593.9 544.5L593.5 534.5L593.6 525.5L594.3 516.5L595.6 507.5L596.8 502.5L599.4 492.5L600.6 489.5L602.5 487.1L604.5 485.9Z"/>
<path fill="rgb(255,0,255)" fill-rule="evenodd" d="M365.3 486.5L367.5 486.3L370.5 487L372.5 488.5L373.5 490.5L374.1 496.5L376.2 509.5L377.1 524.5L377.1 538.5L376.6 550.5L375.9 557.5L374.1 568.5L373.7 573.5L373.2 575.5L371.5 577.4L369.5 578.4L367.5 578.7L365.5 578.6L363.5 578L360.1 575.5L358.5 573.5L357.4 571.5L356.6 567.5L357 564.5L357.7 562.5L359.5 559.8L361.5 557.9L362.4 563.5L362.4 566.5L362.7 566.5L363 534.5L362.7 498.5L362.4 498.5L362.4 501.5L361.5 507.1L359.5 505.2L357.7 502.5L356.8 499.5L356.7 496.5L357.9 492.5L359.5 490.1L362.5 487.6ZM605.9 486.5L608.5 486.3L610.5 486.7L612.5 487.6L614.5 489.1L617.1 492.5L617.9 494.5L618.4 497.5L618 500.5L617.3 502.5L615.5 505.2L613.5 507.1L613 501.5L612.5 499.8L612.3 500.5L611.9 509.5L611.8 530.5L611.9 554.5L612.3 564.5L612.5 565.2L613 563.5L613.5 557.9L615.5 559.8L617.3 562.5L618.2 565.5L618.3 568.5L617.1 572.5L614.5 575.9L611.5 578L609.5 578.6L607.5 578.7L605.5 578.4L603.5 577.4L602.5 576.5L601.5 574.5L598.7 554.5L597.9 538.5L597.9 525.5L598.4 514.5L599.1 507.5L600.9 496.5L601.3 491.5L601.8 489.5L602.5 488.5L604.5 487Z"/>
<path fill="none" stroke="#000" stroke-width="1" d="M540 879.5L522.5 778.9L515.5 737L509.3 696.5L504.6 660.5L502.6 642.5L500.9 624.5L499.4 606.5L498.4 589.5L497.1 564.5L496.7 550.5L496.5 532.5L496.7 514.5L497.1 500.5L498.4 474.5L500.5 444.5L502.1 427.5L503.9 410.5L508.5 374.3L512.5 347L517.5 315.7L544.1 161.5L551.3 117.5L558.2 73.5M435 879.5L452.5 778.9L459.5 737L465.7 696.5L470.4 660.5L472.4 642.5L474.1 624.5L475.6 606.5L476.6 589.5L477.9 564.5L478.3 550.5L478.5 532.5L478.3 514.5L477.9 500.5L476.6 474.5L474.5 444.5L472.9 427.5L471.1 410.5L466.5 374.3L462.5 347L457.5 315.7L430.9 161.5L423.7 117.5L416.8 73.5M662.9 879.5L641.9 843.5L595.5 766.8L585.5 749.8L576.5 734.2L566.5 715.9L557.5 698.4L549.5 681.6L542.5 665.4L535.5 647.2L530 630.5L525.3 613.5L523.2 604.5L521.3 595.5L519.5 584.8L518.1 574.5L515.9 563.5L514.6 552.5L513.9 543.5L513.7 534.5L513.8 525.5L514.2 516.5L514.9 509.5L515.7 502.5L516.8 496.5L518.1 490.5L519.3 481.5L520.8 472.5L523.6 458.5L527.1 444.5L531.9 428.5L537.5 412.3L544.2 395.5L551.5 379L557.5 366.6L564.5 352.9L572.5 338L581.5 322.1L597.5 294.9L644.9 216.5L658.9 192.5L671.8 169.5L684.8 145.5L696.8 122.5L708.7 98.5L720.5 73.5M312.1 879.5L333.1 843.5L379.5 766.8L389.5 749.8L398.5 734.2L408.5 715.9L417.5 698.4L425.5 681.6L432.5 665.4L439.5 647.2L445 630.5L449.7 613.5L451.8 604.5L453.7 595.5L455.5 584.8L456.9 574.5L459.1 563.5L460.4 552.5L461.1 543.5L461.3 534.5L461.2 525.5L460.8 516.5L460.1 509.5L459.3 502.5L458.2 496.5L456.9 490.5L455.7 481.5L454.2 472.5L451.4 458.5L447.9 444.5L443.1 428.5L437.5 412.3L430.8 395.5L423.5 379L417.5 366.6L410.5 352.9L402.5 338L393.5 322.1L377.5 294.9L330.1 216.5L316.1 192.5L303.2 169.5L290.2 145.5L278.2 122.5L266.3 98.5L254.5 73.5M862.8 879.5L853.6 869.5L844.9 860.5L835.8 851.5L827.3 843.5L818.5 835.5L809.3 827.5L799.7 819.5L789.6 811.5L779.1 803.5L769.4 796.5L747.7 781.5L726.2 767.5L670.5 732.3L654.5 721.7L640.5 711.9L624.5 699.9L610.5 688.4L603.5 682.1L597.5 676.5L586.5 665.2L579.5 657.3L573.5 649.9L567.5 641.8L562.5 634.3L557.5 626L552.9 617.5L549.1 609.5L545.5 600.7L543.2 594.5L541 587.5L539.3 581.5L537.7 574.5L536.1 570.5L534.4 565.5L533.1 560.5L531.8 554.5L530.7 546.5L530 537.5L530 528.5L530.6 519.5L531.6 511.5L533.3 503.5L535.4 496.5L537.7 490.5L539.3 483.5L541 477.5L543.2 470.5L545.5 464.3L548.2 457.5L551 451.5L554.5 444.4L558.4 437.5L562.5 430.7L566.5 424.7L571.5 417.7L576.5 411.3L581.5 405.4L587.5 398.7L598.5 387.5L609.5 377.5L622.5 366.7L636.5 356L650.5 346L665.5 335.9L682.5 325L734 292.5L749.2 282.5L763.8 272.5L779.1 261.5L794.7 249.5L809.3 237.5L823 225.5L831.6 217.5L839.9 209.5L855.4 193.5L870.8 176.5L885.8 158.5L900.6 139.5L915.9 118.5L930.9 96.5L945.7 73.5M112.2 879.5L121.4 869.5L130.1 860.5L139.2 851.5L147.7 843.5L156.5 835.5L165.7 827.5L175.3 819.5L185.4 811.5L195.9 803.5L205.6 796.5L227.3 781.5L248.8 767.5L304.5 732.3L320.5 721.7L334.5 711.9L350.5 699.9L364.5 688.4L371.5 682.1L377.5 676.5L388.5 665.2L395.5 657.3L401.5 649.9L407.5 641.8L412.5 634.3L417.5 626L422.1 617.5L425.9 609.5L429.5 600.7L431.8 594.5L434 587.5L435.7 581.5L437.3 574.5L438.9 570.5L440.6 565.5L441.9 560.5L443.2 554.5L444.3 546.5L445 537.5L445 528.5L444.4 519.5L443.4 511.5L441.7 503.5L439.6 496.5L437.3 490.5L435.7 483.5L434 477.5L431.8 470.5L429.5 464.3L426.8 457.5L424 451.5L420.5 444.4L416.6 437.5L412.5 430.7L408.5 424.7L403.5 417.7L398.5 411.3L393.5 405.4L387.5 398.7L376.5 387.5L365.5 377.5L352.5 366.7L338.5 356L324.5 346L309.5 335.9L292.5 325L241 292.5L225.8 282.5L211.2 272.5L195.9 261.5L180.3 249.5L165.7 237.5L152 225.5L143.4 217.5L135.1 209.5L119.6 193.5L104.2 176.5L89.2 158.5L74.4 139.5L59.1 118.5L44.1 96.5L29.3 73.5M946.5 584.5L942.5 583.9L938.5 583.5L934.5 583.4L929.5 583.8L925.5 584.3L920.5 585.4L915.5 586.8L909.5 588.8L901.5 592L892.5 596L845.3 619.5L832.6 625.5L819.1 631.5L805.5 637L792.5 641.8L779.5 646.1L766.5 649.8L753.5 652.9L741.5 655.3L728.5 657.3L716.5 658.5L704.5 659.2L692.5 659.2L680.5 658.7L669.5 657.5L656.5 655.4L649.5 653.8L643.5 652.2L637.5 650.4L631.5 648.3L620.5 643.8L614.5 640.9L609.5 638.2L604.5 635.2L599.5 631.9L594.5 628.3L590.5 625L586.5 621.5L582.5 617.6L577.5 612.2L573.5 607.3L569.5 601.8L566.2 596.5L563.4 591.5L560.9 586.5L558.3 580.5L556.2 574.5L554 570.5L552.1 566.5L549.2 558.5L547.1 550.5L545.7 541.5L545.2 532.5L545.7 523.5L547.1 514.5L549.2 506.5L552.1 498.5L554 494.5L556.2 490.5L558.3 484.5L560.9 478.5L563.4 473.5L566.2 468.5L569.5 463.2L573.5 457.7L577.5 452.8L582.5 447.4L586.5 443.5L590.5 440L594.5 436.7L599.5 433.1L604.5 429.8L609.5 426.8L614.5 424.1L620.5 421.2L631.5 416.7L637.5 414.6L643.5 412.8L649.5 411.2L656.5 409.6L669.5 407.5L680.5 406.3L692.5 405.8L704.5 405.8L716.5 406.5L728.5 407.7L741.5 409.7L753.5 412.1L766.5 415.2L779.5 418.9L792.5 423.2L805.5 428L819.1 433.5L832.6 439.5L845.3 445.5L892.5 469L901.5 473L909.5 476.2L915.5 478.2L920.5 479.6L925.5 480.7L929.5 481.2L934.5 481.6L938.5 481.5L942.5 481.1L946.5 480.5M28.5 584.5L32.5 583.9L36.5 583.5L40.5 583.4L45.5 583.8L49.5 584.3L54.5 585.4L59.5 586.8L65.5 588.8L73.5 592L82.5 596L129.7 619.5L142.4 625.5L155.9 631.5L169.5 637L182.5 641.8L195.5 646.1L208.5 649.8L221.5 652.9L233.5 655.3L246.5 657.3L258.5 658.5L270.5 659.2L282.5 659.2L294.5 658.7L305.5 657.5L318.5 655.4L325.5 653.8L331.5 652.2L337.5 650.4L343.5 648.3L354.5 643.8L360.5 640.9L365.5 638.2L370.5 635.2L375.5 631.9L380.5 628.3L384.5 625L388.5 621.5L392.5 617.6L397.5 612.2L401.5 607.3L405.5 601.8L408.8 596.5L411.6 591.5L414.1 586.5L416.7 580.5L418.8 574.5L421 570.5L422.9 566.5L425.8 558.5L427.9 550.5L429.3 541.5L429.8 532.5L429.3 523.5L427.9 514.5L425.8 506.5L422.9 498.5L421 494.5L418.8 490.5L416.7 484.5L414.1 478.5L411.6 473.5L408.8 468.5L405.5 463.2L401.5 457.7L397.5 452.8L392.5 447.4L388.5 443.5L384.5 440L380.5 436.7L375.5 433.1L370.5 429.8L365.5 426.8L360.5 424.1L354.5 421.2L343.5 416.7L337.5 414.6L331.5 412.8L325.5 411.2L318.5 409.6L305.5 407.5L294.5 406.3L282.5 405.8L270.5 405.8L258.5 406.5L246.5 407.7L233.5 409.7L221.5 412.1L208.5 415.2L195.5 418.9L182.5 423.2L169.5 428L155.9 433.5L142.4 439.5L129.7 445.5L82.5 469L73.5 473L65.5 476.2L59.5 478.2L54.5 479.6L49.5 480.7L45.5 481.2L40.5 481.6L36.5 481.5L32.5 481.1L28.5 480.5M627.3 451.5L635.5 450.8L643.5 450.8L652.5 451.7L660.5 453.4L668.5 455.7L676.5 458.9L684.5 463L691.5 467.5L698 472.5L704.4 478.5L709.6 484.5L714.6 491.5L718.6 498.5L720.5 502.5L722.1 506.5L724.3 513.5L726 521.5L726.8 529.5L726.6 537.5L725.7 545.5L724.1 552.5L721.3 560.5L718.1 567.5L714 574.5L709.6 580.5L704.4 586.5L698 592.5L691.5 597.5L684.5 602L677.5 605.6L669.5 608.9L661.1 611.5L652.5 613.3L644.5 614.1L636.5 614.3L628.5 613.7L620.5 612.3L613.5 610.3L606.5 607.5L599.5 603.9L593.5 599.8L590.5 597.3L587.4 594.5L584.5 591.5L581.5 587.9L577.5 582.2L575.3 578.5L573.2 574.5L569.9 569.5L566.7 563.5L564.2 557.5L562.3 551.5L560.8 544.5L560 536.5L559.9 531.5L560 527.5L561 519.5L562.9 511.5L565.3 504.5L568.2 498.5L570.5 494.5L573.2 490.5L576.5 484.4L579.7 479.5L584.5 473.5L589.5 468.5L594.5 464.5L600.5 460.6L606.5 457.5L613.5 454.7L620.5 452.7L627.3 451.5M324.5 451.5L316.5 452.9L308.5 455.1L300.5 458L292.5 461.9L284.9 466.5L278.2 471.5L271.6 477.5L266.2 483.5L261 490.5L256.9 497.5L253.7 504.5L250.9 512.5L249.3 519.5L248.4 527.5L248.2 535.5L249 543.5L250.7 551.5L252.9 558.5L254.5 562.5L256.4 566.5L260.4 573.5L265.4 580.5L270.6 586.5L277 592.5L283.5 597.5L290.5 602L298.5 606.1L306.5 609.3L314.5 611.6L322.5 613.3L331.5 614.2L340.5 614.2L348.5 613.4L355.5 612L362.5 609.9L369.5 607.1L375.5 603.9L381.5 599.8L386.5 595.6L391.4 590.5L395.3 585.5L398.5 580.6L401.8 574.5L404.5 570.5L406.8 566.5L409.7 560.5L412.1 553.5L414 545.5L415 537.5L415.1 529.5L414.3 521.5L412.9 514.5L411.2 508.5L408.8 502.5L405.7 496.5L401.8 490.5L398 483.5L393.8 477.5L391.4 474.5L388.5 471.4L385.5 468.5L382.5 466L376.5 461.8L369.5 457.9L362.5 455.1L355.5 453L348.5 451.6L340.5 450.8L332.5 450.8L324.5 451.5M618.2 473.5L623.5 473.4L628.5 473.9L634.5 475.2L639.5 476.9L644.5 479.1L649.5 481.9L654.5 485.4L658.5 488.8L662.5 492.9L666.2 497.5L669.5 502.5L672.1 507.5L674.2 512.5L676 518.5L677 523.5L677.6 529.5L677.6 534.5L677.1 540.5L676 546.5L674.5 551.5L672.5 556.5L670.1 561.5L666.9 566.5L663 571.5L659.2 575.5L654.7 579.5L649.5 583.1L644.5 585.9L639.5 588.1L634.5 589.8L628.5 591.1L623.5 591.6L618.5 591.5L614.5 591.1L610.5 590.2L606.5 588.9L602.5 587.1L599.5 585.3L595.9 582.5L592.5 579.1L588.8 574.5L585.5 570.7L583.5 568L580.7 563.5L578.2 558.5L576.3 553.5L574.6 547.5L573.5 541.5L573 535.5L573 529.5L573.4 524.5L574.2 519.5L575.4 514.5L577 509.5L579.2 504.5L581.3 500.5L583.9 496.5L592.8 485.5L595.9 482.5L599.5 479.7L603.5 477.4L608.5 475.4L613.5 474.1L618.2 473.5M351.5 473.4L346.5 473.9L340.5 475.2L335.5 476.9L330.5 479.1L325.5 481.9L320.5 485.4L316.5 488.8L312.5 492.9L308.8 497.5L305.5 502.5L302.9 507.5L300.8 512.5L299.3 517.5L298 523.5L297.4 529.5L297.4 534.5L297.9 540.5L298.8 545.5L300.2 550.5L302.5 556.5L304.9 561.5L308.1 566.5L311.5 571L315.5 575.3L319.5 578.8L324.5 582.5L329.5 585.4L334.5 587.7L339.6 589.5L345.5 590.9L350.5 591.5L355.5 591.6L360.5 591.1L365.5 590L370.5 588.1L374.5 585.9L378.5 583L381.5 580.2L390.4 569.5L393.1 565.5L395.3 561.5L397.6 556.5L399.3 551.5L400.6 546.5L401.5 541.5L401.9 536.5L402 530.5L401.6 524.5L400.6 518.5L399 512.5L396.8 506.5L394.3 501.5L391.8 497.5L389.6 494.5L386.2 490.5L383.1 486.5L380.2 483.5L376.5 480.4L373.5 478.5L369.5 476.5L365.5 475L360.5 473.9L356.5 473.5L351.5 473.4M607.4 487.5L610.5 486.7L613.5 486.5L617.5 486.9L621.5 487.9L625.4 489.5L629 491.5L632.5 493.9L635.5 496.5L638.5 499.5L640.9 502.5L643.7 506.5L645.9 510.5L647.6 514.5L649.2 519.5L650.1 523.5L650.8 528.5L650.9 533.5L650.7 537.5L650.1 541.5L649.2 545.5L648 549.5L646.3 553.5L644.3 557.5L641.7 561.5L639.3 564.5L636.5 567.6L633.2 570.5L629.5 573.2L626.5 574.9L622.5 576.7L618.5 577.9L615.5 578.4L612.5 578.5L610.5 578.3L607.5 577.6L605.5 576.7L603.8 575.5L600.5 572.5L596 567.5L593.9 564.5L591.4 560.5L589.9 557.5L588.1 553.5L586.7 549.5L585.6 545.5L584.9 541.5L584.4 537.5L584.2 533.5L584.2 529.5L585 522.5L586.7 515.5L588.1 511.5L589.4 508.5L591.4 504.5L593.2 501.5L595.3 498.5L597.7 495.5L600.5 492.5L603.8 489.5L605.5 488.3L607.4 487.5M355.5 487.3L351.9 488.5L348.5 490.1L345.5 491.8L342.5 493.9L339.5 496.5L336.5 499.5L334.1 502.5L332 505.5L330.2 508.5L328.2 512.5L326.7 516.5L325.5 520.5L324.7 524.5L324.2 528.5L324.1 532.5L324.2 536.5L324.7 540.5L325.5 544.5L326.7 548.5L328.2 552.5L330.2 556.5L332 559.5L334.8 563.5L337.4 566.5L340.6 569.5L343.5 571.8L346.5 573.8L350.5 575.9L353.5 577.1L357.5 578.1L360.5 578.5L363.5 578.4L366.5 577.9L368.5 577.2L370.5 576.1L373.5 573.5L376.4 570.5L379 567.5L381.8 563.5L384.1 559.5L386 555.5L387.6 551.5L388.8 547.5L389.8 543.5L390.4 539.5L390.8 535.5L390.8 531.5L390.6 527.5L390 522.5L389.1 518.5L387.9 514.5L386.5 510.5L384.6 506.5L382.4 502.5L379.7 498.5L377.3 495.5L374.5 492.5L371.2 489.5L369.5 488.3L367.5 487.4L364.5 486.7L361.5 486.5L358.5 486.7L355.5 487.3M609.5 494.5L610.5 493.8L611.5 493.9L613.5 494.7L616.5 496.5L618.9 498.5L621 500.5L623.6 503.5L625.8 506.5L627.6 509.5L629.1 512.5L631.4 518.5L632.8 524.5L633.2 527.5L633.5 531.5L633.4 535.5L633.1 538.5L631.9 544.5L630 550.5L627 556.5L623.6 561.5L621 564.5L618.9 566.5L616.5 568.5L614.5 569.8L612.5 570.7L610.5 571.2L609.5 570.5L603.5 563L600.9 558.5L599 554.5L597.2 549.5L595.9 544.5L595 539.5L594.6 533.5L594.8 527.5L595.5 522.5L596.6 517.5L598.2 512.5L600.4 507.5L603.2 502.5L609.5 494.5M362.5 494.3L360.5 495.2L358.5 496.5L356.1 498.5L354 500.5L352.2 502.5L349.9 505.5L346.9 510.5L344.6 515.5L342.8 521.5L341.8 527.5L341.5 533.5L341.8 537.5L342.2 540.5L343.6 546.5L345.9 552.5L348.6 557.5L352.2 562.5L356.1 566.5L358.5 568.5L360.5 569.8L362.5 570.7L364.5 571.2L365.5 570.5L371.5 563L374.1 558.5L376.4 553.5L378.1 548.5L379.5 542.5L380.2 536.5L380.3 530.5L379.8 524.5L378.6 518.5L376.8 512.5L374.6 507.5L371.5 502L365.5 494.5L364.5 493.8L362.5 494.3M612.4 504.5L613.5 505.9L615.8 510.5L617.1 513.5L618.4 517.5L619.3 520.5L620 524.5L620.5 528.5L620.7 532.5L620.5 536.5L620 540.5L619.3 544.5L618.4 547.5L617.1 551.5L615.8 554.5L613.8 558.5L612.5 560.6L611.5 559.1L609.2 554.5L607.5 550.5L606 546.5L604.9 542.5L604.3 539.5L603.8 535.5L603.7 532.5L603.8 529.5L604.3 525.5L604.9 522.5L606 518.5L607.5 514.5L609.2 510.5L611.2 506.5L612.4 504.5M362.5 504.4L361.2 506.5L359.2 510.5L357.9 513.5L356.6 517.5L355.7 520.5L355 524.5L354.5 528.5L354.3 532.5L354.5 536.5L355 540.5L355.7 544.5L356.6 547.5L357.9 551.5L359.2 554.5L361.2 558.5L362.5 560.6L363.5 559.1L365.8 554.5L367.5 550.5L369 546.5L370.1 542.5L370.7 539.5L371.2 535.5L371.3 532.5L371.2 529.5L370.7 525.5L370.1 522.5L369 518.5L367.5 514.5L365.8 510.5L363.5 505.9L362.5 504.4"/>
</g>
<circle cx="487.5" cy="532.5" r="457" fill="none" stroke="#0000ff" stroke-width="1.1" shape-rendering="crispEdges"/>
<g fill="none" stroke="#0000ff" stroke-width="1" shape-rendering="crispEdges">
<path d="M371.5 490.5H603.5M371.5 574.5H603.5M362.5 499V566M612.5 499V566"/>
<path d="M371.5 490.5A9 9 0 0 0 362.5 499.5M362.5 565.5A9 9 0 0 0 371.5 574.5M603.5 490.5A9 9 0 0 1 612.5 499.5M612.5 565.5A9 9 0 0 1 603.5 574.5"/>
</g>
<g fill="none" stroke="#000" stroke-width="1" shape-rendering="crispEdges">
<rect x="369.5" y="488.5" width="4" height="4"/><rect x="360.5" y="497.5" width="4" height="4"/><rect x="360.5" y="563.5" width="4" height="4"/><rect x="369.5" y="572.5" width="4" height="4"/>
<rect x="601.5" y="488.5" width="4" height="4"/><rect x="610.5" y="497.5" width="4" height="4"/><rect x="610.5" y="563.5" width="4" height="4"/><rect x="601.5" y="572.5" width="4" height="4"/>
<rect x="28.5" y="530.5" width="4" height="4"/><rect x="942.5" y="530.5" width="4" height="4"/>
</g>
<text class="lbl" x="462" y="306.5" textLength="47" lengthAdjust="spacingAndGlyphs">30мм</text>
<text class="lbl" x="464.5" y="374.7" textLength="47" lengthAdjust="spacingAndGlyphs">20мм</text>
<text class="lbl" x="466" y="446" textLength="46.5" lengthAdjust="spacingAndGlyphs">10мм</text>
</g>
</svg>
<div id="title">femm - [magnetic.ans]</div>
<div id="menu">
<span style="left:29px">File</span><span style="left:61px">Edit</span><span style="left:95px">Zoom</span><span style="left:141px">View</span><span style="left:180px">Operation</span><span style="left:247px">Plot X-Y</span><span style="left:304px">Integrate</span><span style="left:365px">Window</span><span style="left:423px">Help</span>
</div>
<div id="dockline"></div>
<div id="topedge"></div>
<div id="tb1"></div>
<div id="tb2"></div>
<div id="ltb"></div>
<div id="ledge"></div>
<div id="status"></div>
<svg id="chrome" width="1333" height="872" viewBox="0 0 1333 872" style="position:absolute;left:0;top:0">
<g shape-rendering="crispEdges">
<rect x="1" y="2" width="16" height="16" fill="#c0c0c0"/>
</g>
<g fill="none" stroke="#000" stroke-width="1.25"><path d="M10.5 2.6C7 2.8 5 3.6 5 5.2V15.2C5 16.8 7 17.3 11.5 17.2"/><ellipse cx="9.4" cy="6.6" rx="3.1" ry="1.35"/><ellipse cx="9.4" cy="10.6" rx="3.1" ry="1.35"/><ellipse cx="9.4" cy="14.6" rx="3.1" ry="1.35"/><path d="M5 6.6H6.3M5 10.6H6.3M5 14.6H6.3"/></g>
<defs><radialGradient id="lens" cx="0.35" cy="0.35" r="0.8"><stop offset="0" stop-color="#fff"/><stop offset="0.6" stop-color="#e4e4e4"/><stop offset="1" stop-color="#a8a8a8"/></radialGradient></defs>
<circle cx="11.6" cy="34.4" r="2.9" fill="url(#lens)"/><circle cx="19" cy="30.2" r="2.9" fill="url(#lens)"/>
<g fill="none" stroke="#000" stroke-width="1.1" stroke-linecap="round"><path d="M7.5 29.5H6.3V31L8.4 35.2C9.2 37 10.8 37.6 12.3 37.3"/><path d="M11.3 25.4H14.3C15.3 25.4 15.8 26.5 16.6 27.2"/><path d="M8.9 33C9.6 31.8 11.3 31.2 12.6 31.6"/><path d="M13.6 32.2L16 29.4"/><path d="M16.1 29.5C16.4 31.8 17.6 33.2 19.7 33.2"/><path d="M16.4 27.6C17.6 26.9 19.6 27 20.8 27.9"/></g>
<g shape-rendering="crispEdges">
<rect x="4" y="49" width="2" height="2" fill="#fff"/><rect x="5" y="50" width="1" height="1" fill="#a0a0a0"/><rect x="5" y="49" width="1" height="1" fill="#c8c8c8"/><rect x="4" y="50" width="1" height="1" fill="#c8c8c8"/><rect x="4" y="54" width="2" height="2" fill="#fff"/><rect x="5" y="55" width="1" height="1" fill="#a0a0a0"/><rect x="5" y="54" width="1" height="1" fill="#c8c8c8"/><rect x="4" y="55" width="1" height="1" fill="#c8c8c8"/><rect x="4" y="59" width="2" height="2" fill="#fff"/><rect x="5" y="60" width="1" height="1" fill="#a0a0a0"/><rect x="5" y="59" width="1" height="1" fill="#c8c8c8"/><rect x="4" y="60" width="1" height="1" fill="#c8c8c8"/><rect x="4" y="64" width="2" height="2" fill="#fff"/><rect x="5" y="65" width="1" height="1" fill="#a0a0a0"/><rect x="5" y="64" width="1" height="1" fill="#c8c8c8"/><rect x="4" y="65" width="1" height="1" fill="#c8c8c8"/>
<rect x="12" y="47" width="23" height="22" fill="#f0f0f0"/><rect x="12" y="47" width="22" height="1" fill="#fff"/><rect x="12" y="47" width="1" height="21" fill="#fff"/><rect x="13" y="67" width="21" height="1" fill="#a0a0a0"/><rect x="33" y="48" width="1" height="20" fill="#a0a0a0"/><rect x="12" y="68" width="23" height="1" fill="#696969"/><rect x="34" y="47" width="1" height="22" fill="#696969"/>
<rect x="35" y="47" width="23" height="22" fill="#f0f0f0"/><rect x="35" y="47" width="22" height="1" fill="#fff"/><rect x="35" y="47" width="1" height="21" fill="#fff"/><rect x="36" y="67" width="21" height="1" fill="#a0a0a0"/><rect x="56" y="48" width="1" height="20" fill="#a0a0a0"/><rect x="35" y="68" width="23" height="1" fill="#696969"/><rect x="57" y="47" width="1" height="22" fill="#696969"/>
<rect x="71" y="49" width="2" height="2" fill="#fff"/><rect x="72" y="50" width="1" height="1" fill="#a0a0a0"/><rect x="72" y="49" width="1" height="1" fill="#c8c8c8"/><rect x="71" y="50" width="1" height="1" fill="#c8c8c8"/><rect x="71" y="54" width="2" height="2" fill="#fff"/><rect x="72" y="55" width="1" height="1" fill="#a0a0a0"/><rect x="72" y="54" width="1" height="1" fill="#c8c8c8"/><rect x="71" y="55" width="1" height="1" fill="#c8c8c8"/><rect x="71" y="59" width="2" height="2" fill="#fff"/><rect x="72" y="60" width="1" height="1" fill="#a0a0a0"/><rect x="72" y="59" width="1" height="1" fill="#c8c8c8"/><rect x="71" y="60" width="1" height="1" fill="#c8c8c8"/><rect x="71" y="64" width="2" height="2" fill="#fff"/><rect x="72" y="65" width="1" height="1" fill="#a0a0a0"/><rect x="72" y="64" width="1" height="1" fill="#c8c8c8"/><rect x="71" y="65" width="1" height="1" fill="#c8c8c8"/>
<rect x="79" y="47" width="23" height="22" fill="#f7f7f7"/><rect x="79" y="68" width="23" height="1" fill="#fff"/><rect x="101" y="47" width="1" height="22" fill="#fff"/><rect x="79" y="47" width="22" height="1" fill="#696969"/><rect x="79" y="47" width="1" height="21" fill="#696969"/><rect x="80" y="48" width="20" height="1" fill="#a0a0a0"/><rect x="80" y="48" width="1" height="19" fill="#a0a0a0"/>
<rect x="102" y="47" width="23" height="22" fill="#f0f0f0"/><rect x="102" y="47" width="22" height="1" fill="#fff"/><rect x="102" y="47" width="1" height="21" fill="#fff"/><rect x="103" y="67" width="21" height="1" fill="#a0a0a0"/><rect x="123" y="48" width="1" height="20" fill="#a0a0a0"/><rect x="102" y="68" width="23" height="1" fill="#696969"/><rect x="124" y="47" width="1" height="22" fill="#696969"/>
<rect x="125" y="47" width="23" height="22" fill="#f0f0f0"/><rect x="125" y="47" width="22" height="1" fill="#fff"/><rect x="125" y="47" width="1" height="21" fill="#fff"/><rect x="126" y="67" width="21" height="1" fill="#a0a0a0"/><rect x="146" y="48" width="1" height="20" fill="#a0a0a0"/><rect x="125" y="68" width="23" height="1" fill="#696969"/><rect x="147" y="47" width="1" height="22" fill="#696969"/>
<rect x="156" y="47" width="23" height="22" fill="#f0f0f0"/><rect x="156" y="47" width="22" height="1" fill="#fff"/><rect x="156" y="47" width="1" height="21" fill="#fff"/><rect x="157" y="67" width="21" height="1" fill="#a0a0a0"/><rect x="177" y="48" width="1" height="20" fill="#a0a0a0"/><rect x="156" y="68" width="23" height="1" fill="#696969"/><rect x="178" y="47" width="1" height="22" fill="#696969"/>
<rect x="179" y="47" width="23" height="22" fill="#f0f0f0"/><rect x="179" y="47" width="22" height="1" fill="#fff"/><rect x="179" y="47" width="1" height="21" fill="#fff"/><rect x="180" y="67" width="21" height="1" fill="#a0a0a0"/><rect x="200" y="48" width="1" height="20" fill="#a0a0a0"/><rect x="179" y="68" width="23" height="1" fill="#696969"/><rect x="201" y="47" width="1" height="22" fill="#696969"/>
<rect x="202" y="47" width="23" height="22" fill="#f0f0f0"/><rect x="202" y="47" width="22" height="1" fill="#fff"/><rect x="202" y="47" width="1" height="21" fill="#fff"/><rect x="203" y="67" width="21" height="1" fill="#a0a0a0"/><rect x="223" y="48" width="1" height="20" fill="#a0a0a0"/><rect x="202" y="68" width="23" height="1" fill="#696969"/><rect x="224" y="47" width="1" height="22" fill="#696969"/>
<rect x="233" y="47" width="23" height="22" fill="#f0f0f0"/><rect x="233" y="47" width="22" height="1" fill="#fff"/><rect x="233" y="47" width="1" height="21" fill="#fff"/><rect x="234" y="67" width="21" height="1" fill="#a0a0a0"/><rect x="254" y="48" width="1" height="20" fill="#a0a0a0"/><rect x="233" y="68" width="23" height="1" fill="#696969"/><rect x="255" y="47" width="1" height="22" fill="#696969"/>
<rect x="256" y="47" width="23" height="22" fill="#f0f0f0"/><rect x="256" y="47" width="22" height="1" fill="#fff"/><rect x="256" y="47" width="1" height="21" fill="#fff"/><rect x="257" y="67" width="21" height="1" fill="#a0a0a0"/><rect x="277" y="48" width="1" height="20" fill="#a0a0a0"/><rect x="256" y="68" width="23" height="1" fill="#696969"/><rect x="278" y="47" width="1" height="22" fill="#696969"/>
<rect x="279" y="47" width="23" height="22" fill="#f0f0f0"/><rect x="279" y="47" width="22" height="1" fill="#fff"/><rect x="279" y="47" width="1" height="21" fill="#fff"/><rect x="280" y="67" width="21" height="1" fill="#a0a0a0"/><rect x="300" y="48" width="1" height="20" fill="#a0a0a0"/><rect x="279" y="68" width="23" height="1" fill="#696969"/><rect x="301" y="47" width="1" height="22" fill="#696969"/>
<rect x="302" y="47" width="23" height="22" fill="#f0f0f0"/><rect x="302" y="47" width="22" height="1" fill="#fff"/><rect x="302" y="47" width="1" height="21" fill="#fff"/><rect x="303" y="67" width="21" height="1" fill="#a0a0a0"/><rect x="323" y="48" width="1" height="20" fill="#a0a0a0"/><rect x="302" y="68" width="23" height="1" fill="#696969"/><rect x="324" y="47" width="1" height="22" fill="#696969"/>
<path d="M18.5 50.5H25.5L28.5 53.5V62.5H18.5Z" fill="#fff" stroke="#000" stroke-width="1"/>
<path d="M25.5 50.5V53.5H28.5" fill="none" stroke="#000" stroke-width="1"/>
<path d="M39.5 62.5V54.5L40.5 53.5H43.5L44.5 54.5H50.5V57.5" fill="#ffff90" stroke="#000" stroke-width="1"/>
<path d="M39.5 62.5L43.5 57.5H54.5L50.5 62.5Z" fill="#808000" stroke="#000" stroke-width="1"/>
</g>
<path d="M47 51.8C48 50 51 49.6 53 52.4" fill="none" stroke="#000" stroke-width="1.1"/><path d="M54.4 50.6V54.2H50.8Z" fill="#000"/>
<g shape-rendering="crispEdges">
<rect x="88" y="56" width="5" height="5" fill="#000"/><rect x="89" y="57" width="3" height="3" fill="#fff"/>
</g>
<path d="M109.5 61.5L116.5 52.5" stroke="#ff0000" stroke-width="1.1" fill="none"/>
<g shape-rendering="crispEdges">
<rect x="115" y="51" width="3" height="3" fill="#000"/><rect x="116" y="52" width="1" height="1" fill="#ff0000"/><rect x="108" y="60" width="3" height="3" fill="#000"/><rect x="109" y="61" width="1" height="1" fill="#ff0000"/>
<rect x="131" y="52" width="10" height="10" fill="#00ff00"/>
<rect x="130" y="51" width="3" height="3" fill="#000"/><rect x="131" y="52" width="1" height="1" fill="#fff"/><rect x="139" y="51" width="3" height="3" fill="#000"/><rect x="140" y="52" width="1" height="1" fill="#fff"/><rect x="130" y="60" width="3" height="3" fill="#000"/><rect x="131" y="61" width="1" height="1" fill="#fff"/><rect x="139" y="60" width="3" height="3" fill="#000"/><rect x="140" y="61" width="1" height="1" fill="#fff"/>
<rect x="161" y="50" width="1" height="15" fill="#000"/><rect x="159" y="62" width="15" height="1" fill="#000"/><rect x="159" y="50" width="2" height="1" fill="#000"/><rect x="159" y="56" width="2" height="1" fill="#000"/><rect x="167" y="63" width="1" height="2" fill="#000"/><rect x="173" y="63" width="1" height="2" fill="#000"/>
</g>
<path d="M162.3 58C163.5 54.5 165.5 53.2 167.3 53.2C169.5 53.2 171.7 55.5 172.8 59.6" fill="none" stroke="#0000ff" stroke-width="1.2"/>
<g shape-rendering="crispEdges"><rect x="189" y="51" width="3" height="13" fill="#000"/><rect x="190" y="50" width="6" height="1" fill="#000"/><rect x="194" y="51" width="2" height="3" fill="#000"/><rect x="185" y="64" width="6" height="1" fill="#000"/><rect x="184" y="61" width="2" height="3" fill="#000"/><rect x="186" y="63" width="1" height="1" fill="#000"/><rect x="193" y="51" width="1" height="1" fill="#000"/></g>
<path d="M212.5 50V51.6L215.6 53.4L211.2 55.3L215.6 57.3L211.2 59.3L215.6 61.4L212.5 63.2V65" fill="none" stroke="#000" stroke-width="1"/><ellipse cx="211.9" cy="55.35" rx="1.7" ry="1.15" fill="none" stroke="#000" stroke-width="0.9"/><ellipse cx="211.9" cy="59.3" rx="1.7" ry="1.15" fill="none" stroke="#000" stroke-width="0.9"/>
<g shape-rendering="crispEdges">
<rect x="237" y="50" width="15" height="15" fill="#ffff00"/><rect x="238" y="51" width="6" height="6" fill="#ececf6"/><rect x="245" y="51" width="6" height="6" fill="#ececf6"/><rect x="238" y="58" width="6" height="6" fill="#ececf6"/><rect x="245" y="58" width="6" height="6" fill="#ececf6"/>
<rect x="239" y="52" width="1" height="1" fill="#ffff00"/>
<rect x="240" y="53" width="1" height="1" fill="#ffff00"/>
<rect x="241" y="54" width="1" height="1" fill="#ffff00"/>
<rect x="242" y="55" width="1" height="1" fill="#ffff00"/>
<rect x="243" y="56" width="1" height="1" fill="#ffff00"/>
<rect x="246" y="52" width="1" height="1" fill="#ffff00"/>
<rect x="247" y="53" width="1" height="1" fill="#ffff00"/>
<rect x="248" y="54" width="1" height="1" fill="#ffff00"/>
<rect x="249" y="55" width="1" height="1" fill="#ffff00"/>
<rect x="250" y="56" width="1" height="1" fill="#ffff00"/>
<rect x="239" y="59" width="1" height="1" fill="#ffff00"/>
<rect x="240" y="60" width="1" height="1" fill="#ffff00"/>
<rect x="241" y="61" width="1" height="1" fill="#ffff00"/>
<rect x="242" y="62" width="1" height="1" fill="#ffff00"/>
<rect x="243" y="63" width="1" height="1" fill="#ffff00"/>
<rect x="246" y="59" width="1" height="1" fill="#ffff00"/>
<rect x="247" y="60" width="1" height="1" fill="#ffff00"/>
<rect x="248" y="61" width="1" height="1" fill="#ffff00"/>
<rect x="249" y="62" width="1" height="1" fill="#ffff00"/>
<rect x="250" y="63" width="1" height="1" fill="#ffff00"/>
</g>
<clipPath id="hc"><rect x="261" y="51" width="13" height="13"/></clipPath>
<g shape-rendering="crispEdges"><rect x="260" y="50" width="15" height="15" fill="#000"/><rect x="261" y="51" width="13" height="13" fill="#fff"/></g>
<g clip-path="url(#hc)" stroke="#000" stroke-width="1.15" fill="none"><path d="M249 51L262 64M253 51L266 64M257 51L270 64M261 51L274 64M265 51L278 64M269 51L282 64M273 51L286 64"/></g>
<clipPath id="dc"><rect x="284" y="51" width="13" height="13"/></clipPath>
<g shape-rendering="crispEdges"><rect x="283" y="50" width="15" height="15" fill="#000"/></g>
<g clip-path="url(#dc)"><rect x="284" y="51" width="13" height="13" fill="#00ff00"/><path d="M284 51L297 64H284Z" fill="#ffff00"/><path d="M284 58.6V64H289.4Z" fill="#ff00ff"/><path d="M291 51H297V57Z" fill="#00ffff"/><path d="M284 51L297 64M290.8 51L297 57.2" stroke="#000" stroke-width="1.3" fill="none"/></g>
<path d="M318.6 62L309 52.5" stroke="#000" stroke-width="2" fill="none"/><path d="M307 51H313.3L307 57.3Z" fill="#000"/>
<g shape-rendering="crispEdges">
<rect x="4" y="79" width="2" height="2" fill="#fff"/><rect x="5" y="80" width="1" height="1" fill="#a0a0a0"/><rect x="5" y="79" width="1" height="1" fill="#c8c8c8"/><rect x="4" y="80" width="1" height="1" fill="#c8c8c8"/><rect x="9" y="79" width="2" height="2" fill="#fff"/><rect x="10" y="80" width="1" height="1" fill="#a0a0a0"/><rect x="10" y="79" width="1" height="1" fill="#c8c8c8"/><rect x="9" y="80" width="1" height="1" fill="#c8c8c8"/><rect x="14" y="79" width="2" height="2" fill="#fff"/><rect x="15" y="80" width="1" height="1" fill="#a0a0a0"/><rect x="15" y="79" width="1" height="1" fill="#c8c8c8"/><rect x="14" y="80" width="1" height="1" fill="#c8c8c8"/><rect x="19" y="79" width="2" height="2" fill="#fff"/><rect x="20" y="80" width="1" height="1" fill="#a0a0a0"/><rect x="20" y="79" width="1" height="1" fill="#c8c8c8"/><rect x="19" y="80" width="1" height="1" fill="#c8c8c8"/><rect x="24" y="79" width="2" height="2" fill="#fff"/><rect x="25" y="80" width="1" height="1" fill="#a0a0a0"/><rect x="25" y="79" width="1" height="1" fill="#c8c8c8"/><rect x="24" y="80" width="1" height="1" fill="#c8c8c8"/>
<rect x="0" y="137" width="28" height="1" fill="#a0a0a0"/><rect x="0" y="138" width="28" height="1" fill="#fff"/>
<rect x="4" y="144" width="2" height="2" fill="#fff"/><rect x="5" y="145" width="1" height="1" fill="#a0a0a0"/><rect x="5" y="144" width="1" height="1" fill="#c8c8c8"/><rect x="4" y="145" width="1" height="1" fill="#c8c8c8"/><rect x="9" y="144" width="2" height="2" fill="#fff"/><rect x="10" y="145" width="1" height="1" fill="#a0a0a0"/><rect x="10" y="144" width="1" height="1" fill="#c8c8c8"/><rect x="9" y="145" width="1" height="1" fill="#c8c8c8"/><rect x="14" y="144" width="2" height="2" fill="#fff"/><rect x="15" y="145" width="1" height="1" fill="#a0a0a0"/><rect x="15" y="144" width="1" height="1" fill="#c8c8c8"/><rect x="14" y="145" width="1" height="1" fill="#c8c8c8"/><rect x="19" y="144" width="2" height="2" fill="#fff"/><rect x="20" y="145" width="1" height="1" fill="#a0a0a0"/><rect x="20" y="144" width="1" height="1" fill="#c8c8c8"/><rect x="19" y="145" width="1" height="1" fill="#c8c8c8"/><rect x="24" y="144" width="2" height="2" fill="#fff"/><rect x="25" y="145" width="1" height="1" fill="#a0a0a0"/><rect x="25" y="144" width="1" height="1" fill="#c8c8c8"/><rect x="24" y="145" width="1" height="1" fill="#c8c8c8"/>
<rect x="2" y="87" width="23" height="22" fill="#f0f0f0"/><rect x="2" y="87" width="22" height="1" fill="#fff"/><rect x="2" y="87" width="1" height="21" fill="#fff"/><rect x="3" y="107" width="21" height="1" fill="#a0a0a0"/><rect x="23" y="88" width="1" height="20" fill="#a0a0a0"/><rect x="2" y="108" width="23" height="1" fill="#696969"/><rect x="24" y="87" width="1" height="22" fill="#696969"/>
<rect x="2" y="109" width="23" height="22" fill="#f0f0f0"/><rect x="2" y="109" width="22" height="1" fill="#fff"/><rect x="2" y="109" width="1" height="21" fill="#fff"/><rect x="3" y="129" width="21" height="1" fill="#a0a0a0"/><rect x="23" y="110" width="1" height="20" fill="#a0a0a0"/><rect x="2" y="130" width="23" height="1" fill="#696969"/><rect x="24" y="109" width="1" height="22" fill="#696969"/>
<rect x="2" y="152" width="23" height="22" fill="#f0f0f0"/><rect x="2" y="152" width="22" height="1" fill="#fff"/><rect x="2" y="152" width="1" height="21" fill="#fff"/><rect x="3" y="172" width="21" height="1" fill="#a0a0a0"/><rect x="23" y="153" width="1" height="20" fill="#a0a0a0"/><rect x="2" y="173" width="23" height="1" fill="#696969"/><rect x="24" y="152" width="1" height="22" fill="#696969"/>
<rect x="2" y="174" width="23" height="22" fill="#f0f0f0"/><rect x="2" y="174" width="22" height="1" fill="#fff"/><rect x="2" y="174" width="1" height="21" fill="#fff"/><rect x="3" y="194" width="21" height="1" fill="#a0a0a0"/><rect x="23" y="175" width="1" height="20" fill="#a0a0a0"/><rect x="2" y="195" width="23" height="1" fill="#696969"/><rect x="24" y="174" width="1" height="22" fill="#696969"/>
<rect x="2" y="196" width="23" height="22" fill="#f0f0f0"/><rect x="2" y="196" width="22" height="1" fill="#fff"/><rect x="2" y="196" width="1" height="21" fill="#fff"/><rect x="3" y="216" width="21" height="1" fill="#a0a0a0"/><rect x="23" y="197" width="1" height="20" fill="#a0a0a0"/><rect x="2" y="217" width="23" height="1" fill="#696969"/><rect x="24" y="196" width="1" height="22" fill="#696969"/>
<rect x="2" y="218" width="23" height="22" fill="#f0f0f0"/><rect x="2" y="218" width="22" height="1" fill="#fff"/><rect x="2" y="218" width="1" height="21" fill="#fff"/><rect x="3" y="238" width="21" height="1" fill="#a0a0a0"/><rect x="23" y="219" width="1" height="20" fill="#a0a0a0"/><rect x="2" y="239" width="23" height="1" fill="#696969"/><rect x="24" y="218" width="1" height="22" fill="#696969"/>
<rect x="2" y="245" width="23" height="22" fill="#f0f0f0"/><rect x="2" y="245" width="22" height="1" fill="#fff"/><rect x="2" y="245" width="1" height="21" fill="#fff"/><rect x="3" y="265" width="21" height="1" fill="#a0a0a0"/><rect x="23" y="246" width="1" height="20" fill="#a0a0a0"/><rect x="2" y="266" width="23" height="1" fill="#696969"/><rect x="24" y="245" width="1" height="22" fill="#696969"/>
<rect x="2" y="267" width="23" height="22" fill="#f0f0f0"/><rect x="2" y="267" width="22" height="1" fill="#fff"/><rect x="2" y="267" width="1" height="21" fill="#fff"/><rect x="3" y="287" width="21" height="1" fill="#a0a0a0"/><rect x="23" y="268" width="1" height="20" fill="#a0a0a0"/><rect x="2" y="288" width="23" height="1" fill="#696969"/><rect x="24" y="267" width="1" height="22" fill="#696969"/>
<rect x="2" y="289" width="23" height="22" fill="#f0f0f0"/><rect x="2" y="289" width="22" height="1" fill="#fff"/><rect x="2" y="289" width="1" height="21" fill="#fff"/><rect x="3" y="309" width="21" height="1" fill="#a0a0a0"/><rect x="23" y="290" width="1" height="20" fill="#a0a0a0"/><rect x="2" y="310" width="23" height="1" fill="#696969"/><rect x="24" y="289" width="1" height="22" fill="#696969"/>
<rect x="2" y="311" width="23" height="22" fill="#f0f0f0"/><rect x="2" y="311" width="22" height="1" fill="#fff"/><rect x="2" y="311" width="1" height="21" fill="#fff"/><rect x="3" y="331" width="21" height="1" fill="#a0a0a0"/><rect x="23" y="312" width="1" height="20" fill="#a0a0a0"/><rect x="2" y="332" width="23" height="1" fill="#696969"/><rect x="24" y="311" width="1" height="22" fill="#696969"/>
<rect x="2" y="338" width="23" height="22" fill="#f0f0f0"/><rect x="2" y="338" width="22" height="1" fill="#fff"/><rect x="2" y="338" width="1" height="21" fill="#fff"/><rect x="3" y="358" width="21" height="1" fill="#a0a0a0"/><rect x="23" y="339" width="1" height="20" fill="#a0a0a0"/><rect x="2" y="359" width="23" height="1" fill="#696969"/><rect x="24" y="338" width="1" height="22" fill="#696969"/>
<rect x="2" y="360" width="23" height="22" fill="#f7f7f7"/><rect x="2" y="381" width="23" height="1" fill="#fff"/><rect x="24" y="360" width="1" height="22" fill="#fff"/><rect x="2" y="360" width="22" height="1" fill="#696969"/><rect x="2" y="360" width="1" height="21" fill="#696969"/><rect x="3" y="361" width="20" height="1" fill="#a0a0a0"/><rect x="3" y="361" width="1" height="19" fill="#a0a0a0"/>
<rect x="2" y="382" width="23" height="22" fill="#f0f0f0"/><rect x="2" y="382" width="22" height="1" fill="#fff"/><rect x="2" y="382" width="1" height="21" fill="#fff"/><rect x="3" y="402" width="21" height="1" fill="#a0a0a0"/><rect x="23" y="383" width="1" height="20" fill="#a0a0a0"/><rect x="2" y="403" width="23" height="1" fill="#696969"/><rect x="24" y="382" width="1" height="22" fill="#696969"/>
<rect x="5" y="90" width="11" height="15" fill="#b0b0b0"/><rect x="6" y="91" width="9" height="13" fill="#fff"/>
<rect x="7" y="93" width="3" height="1" fill="#000"/><rect x="8" y="95" width="6" height="1" fill="#000"/><rect x="8" y="97" width="6" height="1" fill="#000"/><rect x="9" y="99" width="4" height="1" fill="#000"/><rect x="8" y="101" width="6" height="1" fill="#000"/>
<rect x="18" y="92" width="1" height="11" fill="#000080"/><rect x="16" y="100" width="5" height="1" fill="#000080"/><rect x="17" y="101" width="3" height="1" fill="#000080"/><rect x="18" y="102" width="1" height="2" fill="#000080"/>
<rect x="5" y="112" width="11" height="15" fill="#b0b0b0"/><rect x="6" y="113" width="9" height="13" fill="#fff"/>
<rect x="7" y="115" width="1" height="1" fill="#000"/><rect x="9" y="115" width="1" height="1" fill="#000"/><rect x="11" y="115" width="2" height="1" fill="#000"/><rect x="7" y="117" width="5" height="1" fill="#000"/><rect x="7" y="119" width="3" height="1" fill="#000"/><rect x="7" y="121" width="4" height="1" fill="#000"/><rect x="8" y="123" width="3" height="1" fill="#000"/>
</g>
<path d="M18.8 114.6L14 123.5" stroke="#000" stroke-width="3" fill="none"/><path d="M17.6 116.2L15 121" stroke="#ffff00" stroke-width="1.1" fill="none"/><circle cx="18.6" cy="114.6" r="1.5" fill="#800000"/><path d="M12.6 121.2L15.5 123.4L13 125.6Z" fill="#000"/>
<circle cx="15" cy="161.2" r="5.6" fill="none" stroke="#000" stroke-width="1.1"/>
<path d="M12.3 161.2 H17.7" stroke="#000" stroke-width="1.2"/>
<path d="M15 158.5 V163.9" stroke="#000" stroke-width="1.2"/>
<path d="M11.6 165.5 L6.6 169.5" stroke="#000080" stroke-width="2.6"/><path d="M11.9 166.4 L7.6 169.9" stroke="#fff" stroke-width="0.7"/>
<circle cx="15" cy="183.2" r="5.6" fill="none" stroke="#000" stroke-width="1.1"/>
<path d="M12.3 183.2 H17.7" stroke="#000" stroke-width="1.2"/>
<path d="M11.6 187.5 L6.6 191.5" stroke="#000080" stroke-width="2.6"/><path d="M11.9 188.4 L7.6 191.9" stroke="#fff" stroke-width="0.7"/>
<path d="M6 199.6H17.5L20.5 202.6V213.4H6Z" fill="#f8f8f8" stroke="#000" stroke-width="1.1"/><path d="M17.5 199.6V202.6H20.5" fill="none" stroke="#000" stroke-width="1"/>
<circle cx="12" cy="206" r="3.4" fill="#fff" stroke="#000" stroke-width="1.1"/><path d="M10.2 205.2L11.2 204.2M11.4 207.6L12.2 206.8" stroke="#00ffff" stroke-width="1.3"/><path d="M14.5 208.6L17.3 210.6" stroke="#000" stroke-width="1.5"/>
<rect x="8.5" y="221.5" width="12" height="12" fill="none" stroke="#0000ff" stroke-width="1" stroke-dasharray="2 2" shape-rendering="crispEdges"/>
<circle cx="13.2" cy="228.8" r="3.5" fill="#fff" stroke="#000" stroke-width="1.1"/><path d="M11.8 229.8L12.6 229M13.6 227.6L14.4 226.8" stroke="#00ffff" stroke-width="1.3"/><path d="M10.6 231.6L6.8 235" stroke="#000" stroke-width="1.9"/>
<g transform="translate(12.2 256.2) rotate(0)"><path d="M0 -5.4L4.5 -1.1H1.5V5.1H-1.5V-1.1H-4.5Z" fill="#00ffff" stroke="#000" stroke-width="1.1" stroke-linejoin="miter"/><path d="M0.7 -0.8V4.4" stroke="#0000ff" stroke-width="0.9"/><path d="M0.5 -3.9L2.9 -1.6" stroke="#0000ff" stroke-width="0.8"/></g>
<g transform="translate(12.8 277.6) rotate(180)"><path d="M0 -5.4L4.5 -1.1H1.5V5.1H-1.5V-1.1H-4.5Z" fill="#00ffff" stroke="#000" stroke-width="1.1" stroke-linejoin="miter"/><path d="M0.7 -0.8V4.4" stroke="#0000ff" stroke-width="0.9"/><path d="M0.5 -3.9L2.9 -1.6" stroke="#0000ff" stroke-width="0.8"/></g>
<g transform="translate(13 299.6) rotate(270)"><path d="M0 -5.4L4.5 -1.1H1.5V5.1H-1.5V-1.1H-4.5Z" fill="#00ffff" stroke="#000" stroke-width="1.1" stroke-linejoin="miter"/><path d="M0.7 -0.8V4.4" stroke="#0000ff" stroke-width="0.9"/><path d="M0.5 -3.9L2.9 -1.6" stroke="#0000ff" stroke-width="0.8"/></g>
<g transform="translate(13 321.6) rotate(90)"><path d="M0 -5.4L4.5 -1.1H1.5V5.1H-1.5V-1.1H-4.5Z" fill="#00ffff" stroke="#000" stroke-width="1.1" stroke-linejoin="miter"/><path d="M0.7 -0.8V4.4" stroke="#0000ff" stroke-width="0.9"/><path d="M0.5 -3.9L2.9 -1.6" stroke="#0000ff" stroke-width="0.8"/></g>
<g shape-rendering="crispEdges">
<rect x="7" y="342" width="1" height="1" fill="#0000ff"/>
<rect x="7" y="346" width="1" height="1" fill="#0000ff"/>
<rect x="7" y="350" width="1" height="1" fill="#0000ff"/>
<rect x="7" y="354" width="1" height="1" fill="#0000ff"/>
<rect x="11" y="342" width="1" height="1" fill="#0000ff"/>
<rect x="11" y="346" width="1" height="1" fill="#0000ff"/>
<rect x="11" y="350" width="1" height="1" fill="#0000ff"/>
<rect x="11" y="354" width="1" height="1" fill="#0000ff"/>
<rect x="15" y="342" width="1" height="1" fill="#0000ff"/>
<rect x="15" y="346" width="1" height="1" fill="#0000ff"/>
<rect x="15" y="350" width="1" height="1" fill="#0000ff"/>
<rect x="15" y="354" width="1" height="1" fill="#0000ff"/>
<rect x="19" y="342" width="1" height="1" fill="#0000ff"/>
<rect x="19" y="346" width="1" height="1" fill="#0000ff"/>
<rect x="19" y="350" width="1" height="1" fill="#0000ff"/>
<rect x="19" y="354" width="1" height="1" fill="#0000ff"/>
<rect x="9" y="374" width="2" height="2" fill="#0000ff"/>
</g>
<path d="M19.2 367.2L12.6 373" stroke="#000" stroke-width="1" fill="none"/><path d="M12.2 373.4V370.2M12.2 373.4H15.4" stroke="#000" stroke-width="1" fill="none"/>
<text x="13" y="391.6" text-anchor="middle" font-family="Liberation Sans,sans-serif" font-weight="bold" font-size="9.5" fill="#000" textLength="12.5" lengthAdjust="spacingAndGlyphs">grid</text>
<text x="13" y="399" text-anchor="middle" font-family="Liberation Sans,sans-serif" font-weight="bold" font-size="9.5" fill="#000" textLength="12.5" lengthAdjust="spacingAndGlyphs">size</text>
</svg>
<div id="panel">
<div id="ptitle">FEMM Output</div>
<svg id="pclose" width="11" height="11" viewBox="0 0 11 11"><path d="M0.5 0.5L10.5 10.5M10.5 0.5L0.5 10.5" stroke="#333" stroke-width="1" fill="none"/></svg>
<div id="ptext"><div>Point: x=15, y=20</div><div>A   = 5.32641e-005 Wb/m</div><div>|B| = 0.17078 T</div><div>Bx  = -0.0010859 T</div><div>By  = 0.170777 T</div><div>|H| = 135903 A/m</div><div>Hx  = -864.133 A/m</div><div>Hy  = 135900 A/m</div><div>mu_x= 1 (rel)</div><div>mu_y = 1 (rel)</div><div>E   = 11604.8 J/m^3</div><div>J   = 0 MA/m^2</div></div>
</div>
</div>
</body>
</html>
